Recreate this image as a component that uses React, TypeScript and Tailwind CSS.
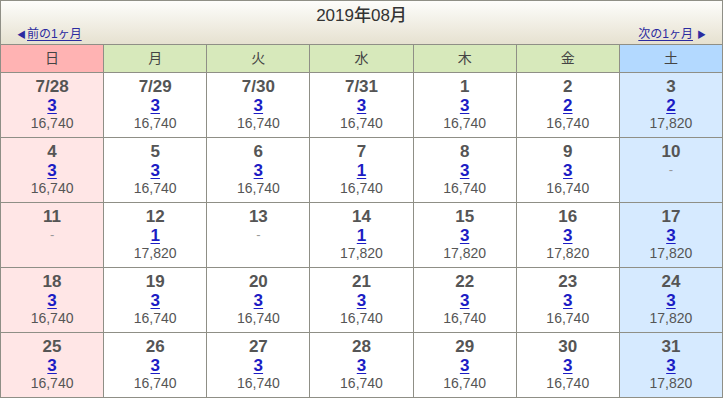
const days = ["日", "月", "火", "水", "木", "金", "土"];

type Cell = { d: string; n?: string; p?: string };

const weeks: Cell[][] = [
  [
    { d: "7/28", n: "3", p: "16,740" },
    { d: "7/29", n: "3", p: "16,740" },
    { d: "7/30", n: "3", p: "16,740" },
    { d: "7/31", n: "3", p: "16,740" },
    { d: "1", n: "3", p: "16,740" },
    { d: "2", n: "2", p: "16,740" },
    { d: "3", n: "2", p: "17,820" },
  ],
  [
    { d: "4", n: "3", p: "16,740" },
    { d: "5", n: "3", p: "16,740" },
    { d: "6", n: "3", p: "16,740" },
    { d: "7", n: "1", p: "16,740" },
    { d: "8", n: "3", p: "16,740" },
    { d: "9", n: "3", p: "16,740" },
    { d: "10" },
  ],
  [
    { d: "11" },
    { d: "12", n: "1", p: "17,820" },
    { d: "13" },
    { d: "14", n: "1", p: "17,820" },
    { d: "15", n: "3", p: "17,820" },
    { d: "16", n: "3", p: "17,820" },
    { d: "17", n: "3", p: "17,820" },
  ],
  [
    { d: "18", n: "3", p: "16,740" },
    { d: "19", n: "3", p: "16,740" },
    { d: "20", n: "3", p: "16,740" },
    { d: "21", n: "3", p: "16,740" },
    { d: "22", n: "3", p: "16,740" },
    { d: "23", n: "3", p: "16,740" },
    { d: "24", n: "3", p: "17,820" },
  ],
  [
    { d: "25", n: "3", p: "16,740" },
    { d: "26", n: "3", p: "16,740" },
    { d: "27", n: "3", p: "16,740" },
    { d: "28", n: "3", p: "16,740" },
    { d: "29", n: "3", p: "16,740" },
    { d: "30", n: "3", p: "16,740" },
    { d: "31", n: "3", p: "17,820" },
  ],
];

function headBg(i: number) {
  if (i === 0) return "bg-[#ffb3b3]";
  if (i === 6) return "bg-[#b3d9ff]";
  return "bg-[#d7e9bb]";
}

function bodyBg(i: number) {
  if (i === 0) return "bg-[#ffe6e6]";
  if (i === 6) return "bg-[#d6eaff]";
  return "bg-white";
}

export default function App() {
  return (
    <div className="w-[723px] h-[398px] bg-white font-['Liberation_Sans','Noto_Sans_CJK_JP',sans-serif]">
      <div className="border border-[#8f8f86] border-b-0 h-[44px] bg-gradient-to-b from-[#fdfdfb] to-[#e6e1d0] flex flex-col">
        <div className="text-center text-[17px] leading-[19px] pt-[5px] text-[#333] font-medium">
          2019年08月
        </div>
        <div className="flex justify-between px-[16px] text-[12px] leading-[14px] mt-[2px]">
          <a className="text-[#2b2ba0] underline underline-offset-2">
            <span className="no-underline inline-block text-[9px] mr-[1px]">◀</span>前の1ヶ月
          </a>
          <a className="text-[#2b2ba0] underline underline-offset-2">
            次の1ヶ月<span className="no-underline inline-block text-[9px] ml-[4px]">▶</span>
          </a>
        </div>
      </div>
      <table className="w-[723px] table-fixed border-collapse">
        <thead>
          <tr className="h-[28px]">
            {days.map((d, i) => (
              <th
                key={d}
                className={`${headBg(i)} border border-[#8f8f86] text-[14px] font-normal text-[#444] p-0`}
              >
                {d}
              </th>
            ))}
          </tr>
        </thead>
        <tbody>
          {weeks.map((w, wi) => (
            <tr key={wi} className="h-[65px]">
              {w.map((c, i) => (
                <td
                  key={i}
                  className={`${bodyBg(i)} border border-[#8f8f86] align-top text-center p-0 pt-[4px]`}
                >
                  <div className="text-[17px] leading-[19px] font-bold text-[#555]">{c.d}</div>
                  {c.n ? (
                    <>
                      <div className="text-[17px] leading-[19px] font-bold text-[#1c1cc4] underline underline-offset-2">
                        {c.n}
                      </div>
                      <div className="text-[14px] leading-[17px] text-[#555]">{c.p}</div>
                    </>
                  ) : (
                    <div className="text-[13px] leading-[18px] text-[#999]">-</div>
                  )}
                </td>
              ))}
            </tr>
          ))}
        </tbody>
      </table>
    </div>
  );
}
